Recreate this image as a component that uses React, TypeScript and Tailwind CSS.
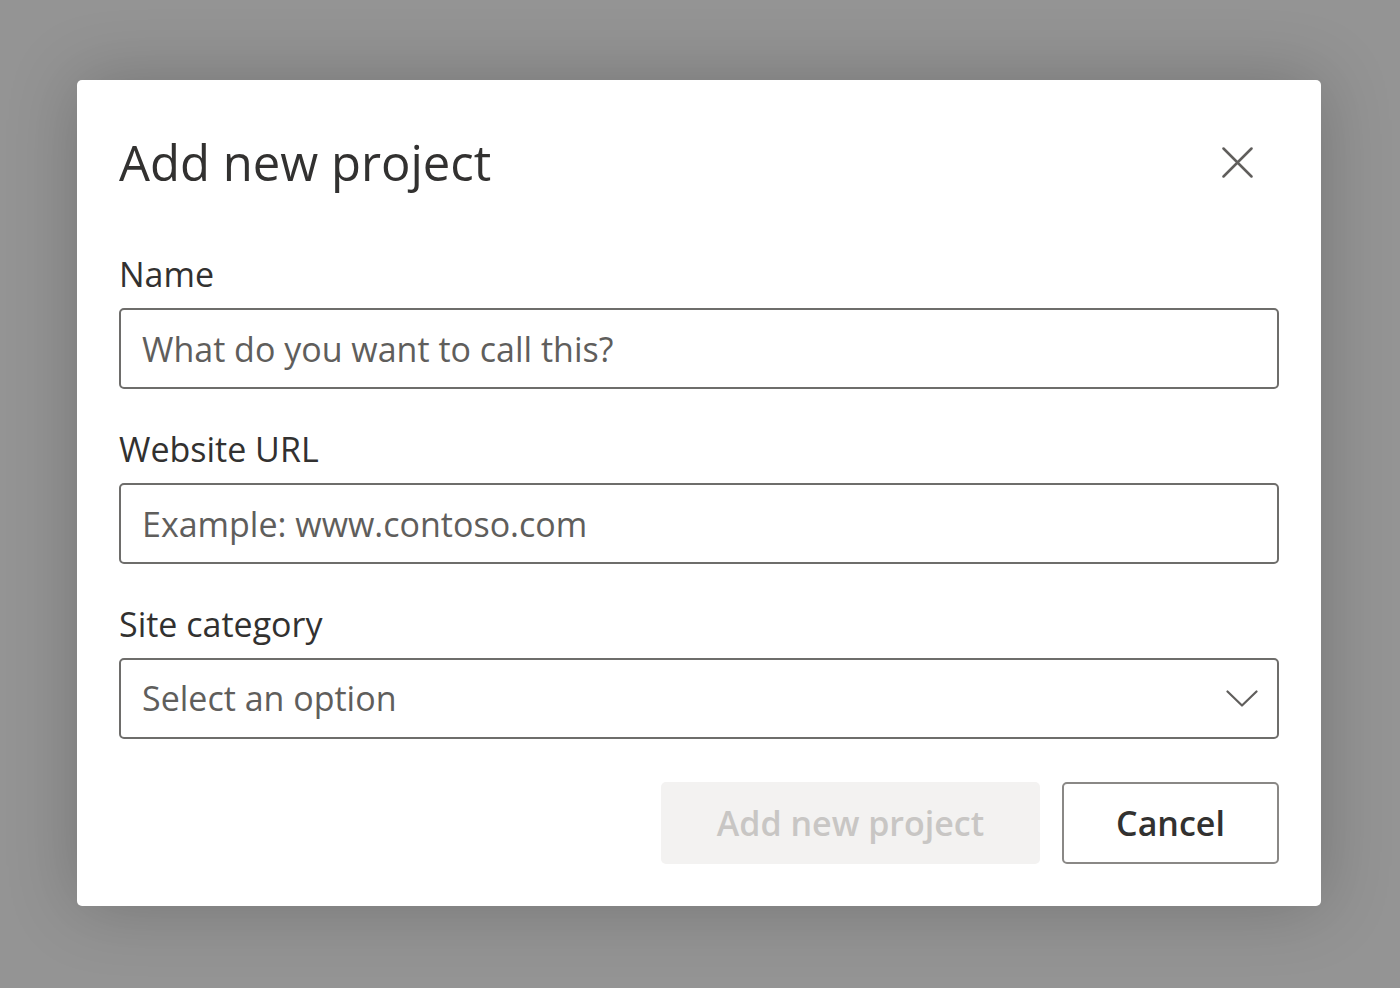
import React from "react";

const font = { fontFamily: '"Open Sans", "Noto Sans", sans-serif' };

function Field({ label, placeholder }: { label: string; placeholder: string }) {
  return (
    <div className="flex flex-col">
      <label className="text-[34px] leading-[46px] text-[#323130] mb-[11px]">{label}</label>
      <input
        className="h-[81px] w-full rounded-[5px] border-2 border-[#6e6d6b] px-[21px] text-[34px] text-[#323130] placeholder:text-[#5f5e5c] outline-none bg-white"
        placeholder={placeholder}
        style={font}
      />
    </div>
  );
}

export default function App() {
  return (
    <div className="h-[988px] w-[1400px] bg-[#949494] pl-[77px] pt-[80px]" style={font}>
      <div className="w-[1244px] h-[826px] bg-white rounded-[5px] shadow-[0_0_70px_rgba(0,0,0,0.22)] px-[42px] pt-[52px] pb-[42px] flex flex-col">
        {/* Header */}
        <div className="flex items-center justify-between h-[60px]">
          <h1 className="text-[49px] leading-[58px] text-[#323130]">Add new project</h1>
          <button className="w-[31px] h-[31px] mr-[26px] text-[#605e5c]" aria-label="Close">
            <svg viewBox="0 0 31 31" className="w-[31px] h-[31px]" fill="none" stroke="currentColor" strokeWidth="2.5" strokeLinecap="round">
              <path d="M1.5 1.5 L29.5 29.5 M29.5 1.5 L1.5 29.5" />
            </svg>
          </button>
        </div>

        <div className="mt-[59px] flex flex-col gap-[37px]">
          <Field label="Name" placeholder="What do you want to call this?" />
          <Field label="Website URL" placeholder="Example: www.contoso.com" />
          <div className="flex flex-col">
            <label className="text-[34px] leading-[46px] text-[#323130] mb-[11px]">Site category</label>
            <div className="h-[81px] w-full rounded-[5px] border-2 border-[#6e6d6b] pl-[21px] pr-[19px] flex items-center justify-between">
              <span className="text-[34px] text-[#5f5e5c]">Select an option</span>
              <svg viewBox="0 0 32 17" className="w-[32px] h-[17px]" fill="none" stroke="#605e5c" strokeWidth="2.2" strokeLinecap="round" strokeLinejoin="round">
                <path d="M1.5 1.5 L16 15.5 L30.5 1.5" />
              </svg>
            </div>
          </div>
        </div>

        {/* Footer */}
        <div className="mt-[43px] flex justify-end gap-[22px]">
          <button
            disabled
            className="w-[379px] h-[82px] rounded-[5px] bg-[#f3f2f1] text-[34px] font-semibold text-[#c8c6c4]"
            style={font}
          >
            Add new project
          </button>
          <button
            className="w-[217px] h-[82px] rounded-[5px] border-2 border-[#8a8886] bg-white text-[34px] font-semibold text-[#323130]"
            style={font}
          >
            Cancel
          </button>
        </div>
      </div>
    </div>
  );
}
